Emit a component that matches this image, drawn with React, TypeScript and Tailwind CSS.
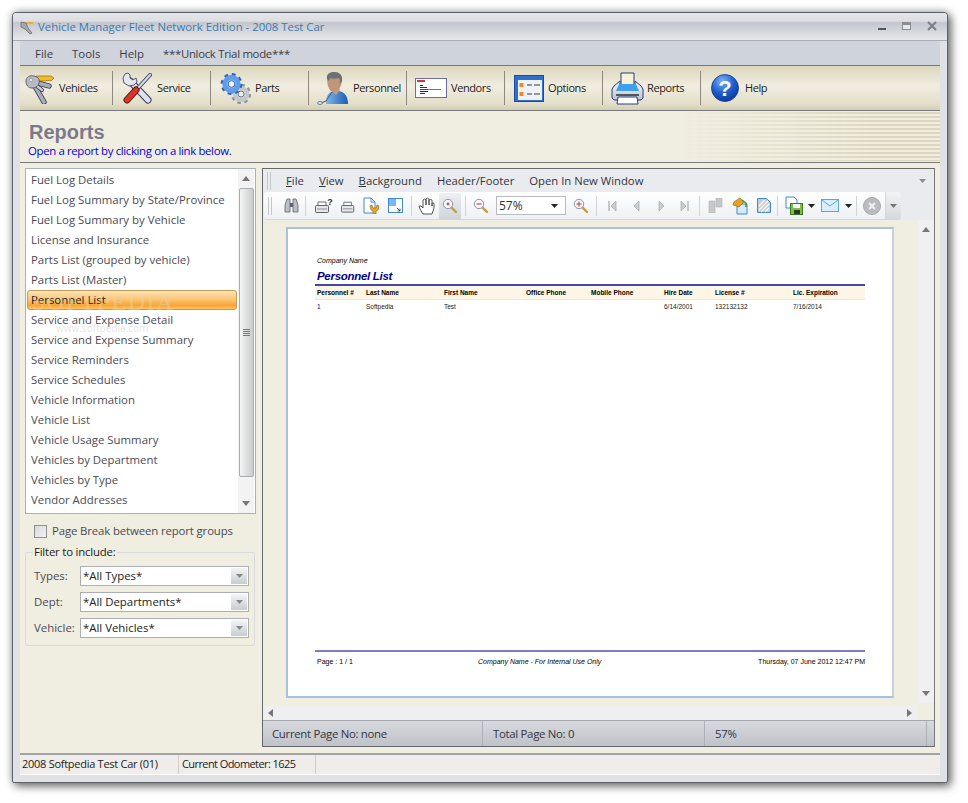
import React from 'react';

const reports = [
  'Fuel Log Details',
  'Fuel Log Summary by State/Province',
  'Fuel Log Summary by Vehicle',
  'License and Insurance',
  'Parts List (grouped by vehicle)',
  'Parts List (Master)',
  'Personnel List',
  'Service and Expense Detail',
  'Service and Expense Summary',
  'Service Reminders',
  'Service Schedules',
  'Vehicle Information',
  'Vehicle List',
  'Vehicle Usage Summary',
  'Vehicles by Department',
  'Vehicles by Type',
  'Vendor Addresses',
];

const KeysIcon = () => (
  <svg width="30" height="32" viewBox="0 0 30 32">
    <path d="M11 4h15l3 2-3 3-2-1-1 1-1-1-1 1H11z" fill="#f5bd22" stroke="#8d6a14" strokeWidth=".7" />
    <g fill="none" strokeLinecap="round">
      <path d="M9 10l15 4M8 11l11 19" stroke="#37395a" strokeWidth="5.400" />
      <path d="M9 10l15 4M8 11l11 19" stroke="#a9aeb5" strokeWidth="3.600" />
      <path d="M8 11l9 7" stroke="#37395a" strokeWidth="4" />
      <path d="M8 11l9 7" stroke="#c6c9ce" strokeWidth="2.400" />
    </g>
    <path d="M1 9c0-4 4-6 8-5 4 1 6 3 5 7-1 4-4 5-7 5-4 0-6-3-6-7z" fill="#b7bbc1" stroke="#45475f" strokeWidth=".8" />
    <circle cx="6" cy="8" r="1.600" fill="#eef0f2" stroke="#777" strokeWidth=".5" />
  </svg>
);

const ToolsIcon = () => (
  <svg width="30" height="32" viewBox="0 0 30 32">
    <g fill="none" strokeLinecap="round">
      <path d="M8 9l18 19" stroke="#2f3560" strokeWidth="7" />
      <path d="M8 9l18 19" stroke="#dfe3ea" strokeWidth="5.200" />
      <path d="M28 3L16 16" stroke="#2f3560" strokeWidth="4" />
      <path d="M28 3L16 16" stroke="#d4d8de" strokeWidth="2.400" />
      <path d="M14 18L5 28" stroke="#4d1210" strokeWidth="7" />
      <path d="M14 18L5 28" stroke="#d8342a" strokeWidth="5.200" />
    </g>
    <path d="M6 1L3 2 1 6l1 5 5 3 5-1 3-3-1-4-3 2-3-2 0-3z" fill="#e4e8ee" stroke="#2f3560" strokeWidth=".8" />
  </svg>
);

const GearsIcon = () => (
  <svg width="31" height="31" viewBox="0 0 31 31">
    <circle cx="21" cy="21" r="8.500" fill="none" stroke="#8f969c" strokeWidth="3.400" strokeDasharray="3.400 3.270" />
    <circle cx="21" cy="21" r="6" fill="none" stroke="#c4c8cc" strokeWidth="4.400" />
    <circle cx="21" cy="21" r="3" fill="#eee" stroke="#6e7479" />
    <circle cx="11.500" cy="11" r="9" fill="none" stroke="#2a63c0" strokeWidth="3.800" strokeDasharray="3.500 3.570" />
    <circle cx="11.500" cy="11" r="6.700" fill="none" stroke="#5f9de8" strokeWidth="5" />
    <circle cx="11.500" cy="11" r="3.400" fill="#f0f4fa" stroke="#2458aa" />
  </svg>
);

const PersonIcon = () => (
  <svg width="31" height="33" viewBox="0 0 31 33">
    <defs>
      <linearGradient id="pb" x1="0" x2="1">
        <stop offset="0" stopColor="#83b5ea" />
        <stop offset="1" stopColor="#1a5cb0" />
      </linearGradient>
    </defs>
    <path d="M9 32c0-7 1-11 7-13h6c6 1 9 6 9 13z" fill="url(#pb)" />
    <path d="M15 19l4 4 4-5-2-4h-5z" fill="#c99c7e" />
    <path d="M10 6c0-4 3-6 7-6 5 0 8 3 8 7 0 6-3 13-8 13s-7-7-7-14z" fill="#c29478" />
    <path d="M10 7c-1-5 3-7 7-7 5 0 9 3 8 9l-2 3c0-3 0-5-1-6-3 1-8 1-9 0l-1 3z" fill="#6c7177" />
    <path d="M15 20l-6 9-5 2" stroke="#38597c" fill="none" strokeWidth="1" />
    <ellipse cx="3" cy="31" rx="2.500" ry="1.500" fill="#dfe4ea" stroke="#38597c" strokeWidth=".7" />
  </svg>
);

const CardIcon = () => (
  <svg width="32" height="20" viewBox="0 0 32 20">
    <rect x=".5" y=".5" width="31" height="19" fill="#fff" stroke="#6b6bad" />
    <rect x="2" y="2" width="8" height="2" fill="#d23c30" />
    <rect x="5" y="7" width="3" height="1" fill="#222" />
    <rect x="5" y="9" width="7" height="1" fill="#333" />
    <rect x="5" y="11" width="12" height="1" fill="#444" />
    <rect x="5" y="13" width="8" height="1" fill="#222" />
    <rect x="5" y="15" width="5" height="1" fill="#333" />
    <rect x="13" y="11" width="13" height="1" fill="#777" />
  </svg>
);

const OptionsIcon = () => (
  <svg width="30" height="27" viewBox="0 0 30 27">
    <rect x=".5" y=".5" width="29" height="26" fill="#2f6fd0" stroke="#1a4da0" />
    <rect x="4" y="5" width="24" height="20" fill="#eef1f5" />
    <rect x="5.500" y="8" width="4" height="4" fill="#f08a20" />
    <rect x="5.500" y="17" width="4" height="4" fill="#f08a20" />
    <path d="M13 10h5M20 10h6M13 19h5M20 19h6" stroke="#777" strokeWidth="1.400" />
  </svg>
);

const PrinterIcon = () => (
  <svg width="33" height="33" viewBox="0 0 33 33">
    <defs>
      <linearGradient id="pr" x1="0" x2="0" y1="0" y2="1">
        <stop offset="0" stopColor="#fbfbfb" />
        <stop offset="1" stopColor="#b9c2cc" />
      </linearGradient>
    </defs>
    <path d="M10 1h13v14H10z" fill="#f6f2d8" stroke="#2a3a80" />
    <path d="M3 14l6-5v5h15V9l6 5 2 3v9l-2 2H3l-2-2v-9z" fill="url(#pr)" stroke="#2a3a80" />
    <path d="M8 12h17l3 7H5z" fill="#3ea0ee" />
    <rect x="5" y="22" width="23" height="2" fill="#555" />
    <path d="M7 25h19l1 7H6z" fill="#fff" stroke="#2a3a80" />
  </svg>
);

const HelpIcon = () => (
  <svg width="28" height="28" viewBox="0 0 28 28">
    <defs>
      <radialGradient id="hb" cx=".4" cy=".25" r=".85">
        <stop offset="0" stopColor="#7fb2f2" />
        <stop offset=".5" stopColor="#1f5fd0" />
        <stop offset="1" stopColor="#0b2f8c" />
      </radialGradient>
    </defs>
    <circle cx="14" cy="14" r="13.500" fill="url(#hb)" stroke="#123a90" strokeWidth=".8" />
    <text x="14" y="22" textAnchor="middle" fontSize="22" fontWeight="700" fill="#fff" fontFamily="Liberation Sans, sans-serif">?</text>
  </svg>
);

const mainButtons = [
  { label: 'Vehicles', icon: <KeysIcon />, w: 'w-[93px]', pad: 'pl-[5px]', gap: 'gap-[4px]' },
  { label: 'Service', icon: <ToolsIcon />, w: 'w-[98px]', pad: 'pl-[9px]', gap: 'gap-[5px]' },
  { label: 'Parts', icon: <GearsIcon />, w: 'w-[98px]', pad: 'pl-[9px]', gap: 'gap-[4px]' },
  { label: 'Personnel', icon: <PersonIcon />, w: 'w-[98px]', pad: 'pl-[8px]', gap: 'gap-[5px]' },
  { label: 'Vendors', icon: <CardIcon />, w: 'w-[98px]', pad: 'pl-[8px]', gap: 'gap-[4px]' },
  { label: 'Options', icon: <OptionsIcon />, w: 'w-[98px]', pad: 'pl-[9px]', gap: 'gap-[4px]' },
  { label: 'Reports', icon: <PrinterIcon />, w: 'w-[98px]', pad: 'pl-[8px]', gap: 'gap-[3px]' },
  { label: 'Help', icon: <HelpIcon />, w: 'w-[98px]', pad: 'pl-[10px]', gap: 'gap-[6px]' },
];

const Sep = () => <div className="w-px h-[20px] bg-[#d0d3d8] shrink-0" />;

const Grip = () => (
  <div className="flex gap-[2px] h-[18px] shrink-0">
    <div className="w-px bg-[#c3c6cb]" />
    <div className="w-px bg-[#c3c6cb]" />
  </div>
);

const Slot = ({ w, children }: { w: string; children?: React.ReactNode }) => (
  <div className={`${w} h-full flex items-center justify-center shrink-0`}>{children}</div>
);

const Caret = ({ color = '#222' }: { color?: string }) => (
  <svg width="7" height="4" viewBox="0 0 7 4"><path d="M0 0h7L3.500 4z" fill={color} /></svg>
);

const ArrowUp = () => (
  <svg width="8" height="5" viewBox="0 0 8 5"><path d="M4 0l4 5H0z" fill="#777" /></svg>
);
const ArrowDown = () => (
  <svg width="8" height="5" viewBox="0 0 8 5"><path d="M0 0h8L4 5z" fill="#777" /></svg>
);

const Loupe = ({ mark }: { mark?: 'plus' | 'minus' | 'dot' }) => (
  <svg width="16" height="16" viewBox="0 0 16 16">
    <path d="M9 9l5 5" stroke="#c89a3c" strokeWidth="2.400" strokeLinecap="round" />
    <circle cx="6" cy="6" r="4.700" fill="#f4f7fa" stroke="#8a97a5" />
    {mark === 'dot' && <circle cx="6" cy="6" r="1.400" fill="#d0503c" />}
    {mark !== 'dot' && <path d="M3.500 6h5" stroke="#d0503c" strokeWidth="1.200" />}
    {mark === 'plus' && <path d="M6 3.500v5" stroke="#d0503c" strokeWidth="1.200" />}
  </svg>
);

const Binoculars = () => (
  <svg width="15" height="15" viewBox="0 0 15 15">
    <path d="M3 1h3v13H1V7zM12 1H9v13h5V7z" fill="#b8c0c8" stroke="#5d6369" strokeWidth=".8" />
    <rect x="6" y="5" width="3" height="4" fill="#5d6369" />
  </svg>
);

const SmallPrinter = ({ help }: { help?: boolean }) => (
  <svg width="18" height="16" viewBox="0 0 18 16">
    <path d="M3 4h8v4H3z" fill="#fff" stroke="#6b7178" />
    <rect x=".5" y="7.500" width="13" height="7" rx="1" fill="#e4e7ea" stroke="#5d6369" />
    <path d="M2 11h10" stroke="#8b9197" />
    {help && (
      <text x="15" y="7" textAnchor="middle" fontSize="9" fontWeight="700" fill="#333" fontFamily="Liberation Sans, sans-serif">?</text>
    )}
  </svg>
);

const PageWrench = () => (
  <svg width="17" height="17" viewBox="0 0 17 17">
    <path d="M1 1h7l4 4v11H1z" fill="#fff" stroke="#3e8ad0" />
    <path d="M8 1v4h4" fill="none" stroke="#3e8ad0" />
    <path d="M9 8l1 3h3l1-3 2 1-1 4-2 1v3h-3v-3l-2-1-1-4z" fill="#e8a820" stroke="#8c6210" strokeWidth=".6" />
  </svg>
);

const PageSize = () => (
  <svg width="15" height="15" viewBox="0 0 15 15">
    <rect x=".5" y=".5" width="14" height="14" fill="#fff" stroke="#3e8ad0" />
    <rect x="1" y="1" width="7" height="7" fill="#7ab7ea" />
    <path d="M9 10l3 3m0-2.500V13H9.500" stroke="#333" fill="none" strokeWidth=".8" />
  </svg>
);

const Hand = () => (
  <svg width="17" height="18" viewBox="0 0 17 18">
    <path d="M5 17l-3-5-1-3 2 0 2 2V3l1.500-1L8 3v5-6l1.500-1L11 2v6-5l1.500-.5L14 3v6-3l1.500 0L16 7v4l-2 6z" fill="#fff" stroke="#444" strokeWidth=".9" />
  </svg>
);

const NavArrow = ({ dir, bar }: { dir: 'l' | 'r'; bar?: boolean }) => (
  <svg width="9" height="12" viewBox="0 0 9 12">
    {dir === 'l' ? (
      <path d={bar ? 'M8 1v10L3 6z' : 'M7 1v10L2 6z'} fill="#c9ccd0" stroke="#a5a8ad" strokeWidth=".7" />
    ) : (
      <path d={bar ? 'M1 1v10l5-5z' : 'M2 1v10l5-5z'} fill="#c9ccd0" stroke="#a5a8ad" strokeWidth=".7" />
    )}
    {bar && <path d={dir === 'l' ? 'M1 1v10' : 'M8 1v10'} stroke="#a5a8ad" strokeWidth="1.200" />}
  </svg>
);

const FacingPages = () => (
  <svg width="15" height="15" viewBox="0 0 15 15">
    <path d="M1 3h6v12H1zM8 0h6v9H8z" fill="#c6c9cc" stroke="#b0b3b7" strokeWidth=".6" />
  </svg>
);

const PaintPage = () => (
  <svg width="17" height="18" viewBox="0 0 17 18">
    <path d="M6 7h10v10H6z" fill="#d6e9fa" stroke="#3e8ad0" />
    <path d="M9 1l4 4-5 5-6-2 1-3z" fill="#e8a020" stroke="#8c6210" strokeWidth=".6" />
    <path d="M11 3l4 3 0 4" stroke="#3c9030" fill="none" strokeWidth="1.400" />
  </svg>
);

const HatchPage = () => (
  <svg width="14" height="15" viewBox="0 0 14 15">
    <path d="M.5.5h9l4 4v10H.5z" fill="#c9ccd0" stroke="#3e8ad0" />
    <path d="M2 8l6-6M2 12l9-9M4 14l8-8M8 14l4-4" stroke="#fff" strokeWidth="1.100" />
  </svg>
);

const SaveIcon = () => (
  <svg width="18" height="19" viewBox="0 0 18 19">
    <path d="M1 1h8l3 3v8H1z" fill="#fff" stroke="#3e8ad0" />
    <rect x="5.500" y="7.500" width="12" height="11" fill="#7cc04a" stroke="#3c7a1e" />
    <rect x="8" y="8" width="7" height="4" fill="#fff" />
    <rect x="9" y="14" width="6" height="4" fill="#333" />
  </svg>
);

const MailIcon = () => (
  <svg width="18" height="13" viewBox="0 0 18 13">
    <rect x=".5" y=".5" width="17" height="12" fill="#d9edfb" stroke="#58a6e0" />
    <path d="M1 1l8 6 8-6" fill="none" stroke="#58a6e0" />
  </svg>
);

const StopIcon = () => (
  <svg width="18" height="18" viewBox="0 0 18 18">
    <circle cx="9" cy="9" r="8.500" fill="#b9bbbe" stroke="#a6a8ab" />
    <path d="M6 6l6 6M12 6l-6 6" stroke="#eee" strokeWidth="2.200" />
  </svg>
);

const PreviewToolbar = () => (
  <div className="w-[637px] h-[28px] flex items-center rounded-[3px] bg-gradient-to-b from-[#ffffff] to-[#eef0f3] border-b border-r border-[#d4d6da] shrink-0 pl-[4px]">
    <Grip />
    <Slot w="w-[11px]" />
    <Slot w="w-[17px]"><Binoculars /></Slot>
    <Slot w="w-[5px]" />
    <Sep />
    <Slot w="w-[9px]" />
    <Slot w="w-[18px]"><SmallPrinter help /></Slot>
    <Slot w="w-[8px]" />
    <Slot w="w-[17px]"><SmallPrinter /></Slot>
    <Slot w="w-[4px]" />
    <Slot w="w-[18px]"><PageWrench /></Slot>
    <Slot w="w-[7px]" />
    <Slot w="w-[16px]"><PageSize /></Slot>
    <Slot w="w-[8px]" />
    <Sep />
    <Slot w="w-[5px]" />
    <Slot w="w-[18px]"><Hand /></Slot>
    <Slot w="w-[4px]" />
    <div className="w-[22px] h-[26px] flex items-center justify-center bg-gradient-to-b from-[#eef0f2] to-[#d0d4d9] shrink-0">
      <Loupe mark="dot" />
    </div>
    <Slot w="w-[4px]" />
    <Sep />
    <Slot w="w-[7px]" />
    <Slot w="w-[16px]"><Loupe mark="minus" /></Slot>
    <Slot w="w-[7px]" />
    <div className="w-[70px] h-[19px] bg-white border border-[#b8bcc2] flex items-center justify-between pl-[2px] pr-[7px] shrink-0 text-[12px] text-[#333]">
      <span>57%</span>
      <Caret />
    </div>
    <Slot w="w-[7px]" />
    <Slot w="w-[16px]"><Loupe mark="plus" /></Slot>
    <Slot w="w-[7px]" />
    <Sep />
    <Slot w="w-[9px]" />
    <Slot w="w-[12px]"><NavArrow dir="l" bar /></Slot>
    <Slot w="w-[12px]" />
    <Slot w="w-[12px]"><NavArrow dir="l" /></Slot>
    <Slot w="w-[13px]" />
    <Slot w="w-[12px]"><NavArrow dir="r" /></Slot>
    <Slot w="w-[11px]" />
    <Slot w="w-[12px]"><NavArrow dir="r" bar /></Slot>
    <Slot w="w-[9px]" />
    <Sep />
    <Slot w="w-[8px]" />
    <Slot w="w-[15px]"><FacingPages /></Slot>
    <Slot w="w-[8px]" />
    <Slot w="w-[17px]"><PaintPage /></Slot>
    <Slot w="w-[9px]" />
    <Slot w="w-[14px]"><HatchPage /></Slot>
    <Slot w="w-[6px]" />
    <Sep />
    <Slot w="w-[7px]" />
    <Slot w="w-[18px]"><SaveIcon /></Slot>
    <Slot w="w-[4px]" />
    <Slot w="w-[8px]"><Caret /></Slot>
    <Slot w="w-[6px]" />
    <Slot w="w-[18px]"><MailIcon /></Slot>
    <Slot w="w-[5px]" />
    <Slot w="w-[8px]"><Caret /></Slot>
    <Slot w="w-[4px]" />
    <Sep />
    <Slot w="w-[6px]" />
    <Slot w="w-[18px]"><StopIcon /></Slot>
    <Slot w="w-[4px]" />
    <div className="w-[16px] h-full flex items-center justify-center border-l border-[#d4d6da] bg-gradient-to-b from-[#f2f3f5] to-[#d5d8dd] rounded-r-[3px] shrink-0">
      <Caret color="#777" />
    </div>
  </div>
);

const cols = 'grid grid-cols-[49px_78px_82px_65px_73px_51px_78px_1fr] pl-[2px]';

const ReportPage = () => (
  <div className="w-[608px] h-[471px] bg-white border-2 border-[#a9c1dc] border-r-[#c5d2e0] flex flex-col px-[27px] pt-[28px] font-['Liberation_Sans',sans-serif] text-black shrink-0">
    <div className="pl-[2px] text-[7px] leading-[8px] italic">Company Name</div>
    <div className="pl-[2px] mt-[4px] text-[11.500px] leading-[14px] font-bold italic tracking-[-0.3px] text-[#00008b]">Personnel List</div>
    <div className="h-[2px] bg-[#4646a8] mt-[1px]" />
    <div className={`${cols} bg-[#fdf5e6] h-[14px] items-center text-[6.500px] font-bold border-b border-[#e6e6e6]`}>
      <span>Personnel #</span>
      <span>Last Name</span>
      <span>First Name</span>
      <span>Office Phone</span>
      <span>Mobile Phone</span>
      <span>Hire Date</span>
      <span>License #</span>
      <span>Lic. Expiration</span>
    </div>
    <div className={`${cols} h-[13px] items-center text-[6.500px] text-[#222]`}>
      <span className="text-[#00008b]">1</span>
      <span>Softpedia</span>
      <span>Test</span>
      <span />
      <span />
      <span>6/14/2001</span>
      <span>132132132</span>
      <span>7/16/2014</span>
    </div>
    <div className="flex-1" />
    <div className="h-[2px] bg-[#7c7cc4]" />
    <div className="grid grid-cols-[161px_1fr_auto] items-center h-[14px] mt-[3px] mb-[27px] text-[7px] pl-[2px]">
      <span>Page : 1 / 1</span>
      <span className="italic">Company Name - For Internal Use Only</span>
      <span className="text-right">Thursday, 07 June 2012 12:47 PM</span>
    </div>
  </div>
);

const Select = ({ label, value }: { label: string; value: string }) => (
  <div className="flex items-center h-[20px]">
    <span className="w-[47px] pl-px text-[#4a4a55]">{label}</span>
    <div className="w-[169px] h-[20px] border border-[#abaeb3] bg-white flex items-center justify-between pl-[2px] pr-px text-[#222]">
      <span>{value}</span>
      <div className="w-[16px] h-[16px] flex items-center justify-center bg-gradient-to-b from-[#f4f5f6] to-[#c8ccd1]">
        <Caret color="#888" />
      </div>
    </div>
  </div>
);

const App = () => {
  return (
    <div className="w-[968px] h-[803px] bg-white pt-[12px] pl-[12px] font-['Open_Sans',sans-serif] text-[11.400px] text-[#333] overflow-hidden">
      <div className="w-[936px] h-[771px] flex flex-col rounded-t-[4px] rounded-b-[2px] border border-[#5f6367] bg-[#dfe1e4] shadow-[3px_3px_10px_rgba(0,0,0,0.55),0_0_8px_rgba(0,0,0,0.25)]">
        {/* title bar */}
        <div className="h-[28px] shrink-0 flex items-center pl-[6px] pr-[10px] pt-px bg-[linear-gradient(to_bottom,#e4e6e9_0%,#dcdee2_30%,#c3c6cd_36%,#e6e8eb_100%)] rounded-t-[4px] border-b border-[#a9acb2]">
          <svg width="16" height="16" viewBox="0 0 16 16" className="mr-[3px]">
            <path d="M6 3h8l1 1-1 1H6z" fill="#e6b030" />
            <path d="M2 3l5 1 2 5 4 5-2 1-5-5-4-2z" fill="#a4a8ae" stroke="#555" strokeWidth=".6" />
          </svg>
          <span className="text-[#3b7aae]">Vehicle Manager Fleet Network Edition - 2008 Test Car</span>
          <div className="ml-auto flex items-center gap-[16px] h-full mb-[2px]">
            <div className="w-[8px] h-[2px] bg-[#555] mt-[6px]" />
            <div className="w-[9px] h-[8px] border border-[#8a8d92] border-t-[3px] bg-[#e6e8eb]" />
            <svg width="10" height="10" viewBox="0 0 10 10">
              <path d="M1 1l8 8M9 1l-8 8" stroke="#7a7e83" strokeWidth="2" />
            </svg>
          </div>
        </div>

        <div className="flex-1 flex flex-col mx-[7px] min-h-0">
          {/* menu */}
          <div className="h-[25px] shrink-0 flex items-center gap-[19px] pl-[15px] pt-[2px] bg-[#cfd3dc] border-b border-[#77797e] text-[#3a3d45]">
            <span>File</span>
            <span>Tools</span>
            <span>Help</span>
            <span className="tracking-[-0.3px]">***Unlock Trial mode***</span>
          </div>

          {/* main toolbar */}
          <div className="h-[45px] shrink-0 flex items-center bg-[linear-gradient(to_bottom,#dcd6bd_0%,#f0ede0_45%,#e4dfca_85%,#d4ceb4_100%)] border-b border-[#77797e]">
            {mainButtons.map((b, i) => (
              <div key={b.label} className={`${b.w} ${b.pad} ${b.gap} h-[34px] flex items-center shrink-0 ${i < 7 ? 'border-r border-[#8d8b80]' : ''}`}>
                {b.icon}
                <span className="text-[#222] text-[11px] tracking-[-0.4px] pt-px">{b.label}</span>
              </div>
            ))}
          </div>

          {/* heading */}
          <div className="h-[52px] shrink-0 flex justify-between bg-[#f0eee1] border-b border-[#77797e]">
            <div className="pl-[9px] pt-[8px]">
              <div className="text-[20px] leading-[26px] font-bold text-[#7a7a8c] font-['Liberation_Sans',sans-serif]">Reports</div>
              <div className="text-[#0000dd] leading-[12px] tracking-[-0.35px] -ml-px">Open a report by clicking on a link below.</div>
            </div>
            <div className="w-[260px] my-px bg-[repeating-linear-gradient(to_bottom,#dcd6bb_0px,#dcd6bb_2px,#f0eee1_2px,#f0eee1_4px)] [mask-image:linear-gradient(to_right,transparent,black_75%)]" />
          </div>

          {/* content */}
          <div className="flex-1 flex gap-[6px] pl-[5px] pt-[5px] bg-[#f0eee1] min-h-0">
            <div className="w-[231px] shrink-0 flex flex-col">
              <div className="h-[346px] relative flex bg-white border border-[#abb2b7] shrink-0">
                <div className="flex-1 pt-px pl-px">
                  {reports.map((r) => (
                    <div
                      key={r}
                      className={
                        r === 'Personnel List'
                          ? 'h-[20px] flex items-center pl-[3px] rounded-[3px] border border-[#c49a5a] bg-[linear-gradient(to_bottom,#fde4b4_0%,#fbc677_45%,#f9a534_80%,#fcc46a_100%)] text-[#222] w-[210px]'
                          : 'h-[20px] flex items-center pl-[4px] text-[#4a4a55]'
                      }
                    >
                      {r}
                    </div>
                  ))}
                </div>
                <div className="w-[16px] mr-px bg-[#f3f3f3] flex flex-col items-center">
                  <div className="h-[19px] flex items-center justify-center"><ArrowUp /></div>
                  <div className="w-[15px] h-[289px] rounded-[2px] border border-[#a9acb0] bg-[linear-gradient(to_right,#f4f4f4,#c9cbce)] flex flex-col items-center justify-center gap-px">
                    <div className="w-[7px] h-px bg-[#777]" />
                    <div className="w-[7px] h-px bg-[#777]" />
                    <div className="w-[7px] h-px bg-[#777]" />
                    <div className="w-[7px] h-px bg-[#777]" />
                  </div>
                  <div className="flex-1 flex items-end pb-[7px]"><ArrowDown /></div>
                </div>
                {/* watermark from the screenshot */}
                <div className="absolute left-[6px] top-[121px] font-['Liberation_Serif',serif] text-[24px] leading-[24px] tracking-[1.500px] text-[#e8d8b8]/40 pointer-events-none">SOFTPEDIA</div>
                <div className="absolute left-[30px] top-[153px] text-[10px] leading-[12px] text-[#bbb]/40 pointer-events-none">www.softpedia.com</div>
              </div>

              <label className="flex items-center gap-[5px] h-[26px] mt-[4px] pl-[9px] text-[#4a4a55] tracking-[-0.13px]">
                <span className="w-[13px] h-[13px] border border-[#8e8f8f] bg-gradient-to-br from-[#d8d8d8] to-[#f4f4f4]" />
                Page Break between report groups
              </label>

              <fieldset className="mt-px w-[230px] h-[101px] border border-[#d8dadd] rounded-[3px] pl-[7px] flex flex-col">
                <legend className="px-px text-[#222] leading-[14px] tracking-[-0.2px]">Filter to include:</legend>
                <div className="flex flex-col gap-[6px] mt-[7px]">
                  <Select label="Types:" value="*All Types*" />
                  <Select label="Dept:" value="*All Departments*" />
                  <Select label="Vehicle:" value="*All Vehicles*" />
                </div>
              </fieldset>
            </div>

            {/* preview panel */}
            <div className="w-[673px] h-[579px] shrink-0 flex flex-col border border-[#66686c] border-r-[#77797e] bg-[#f0eee1]">
              <div className="h-[23px] shrink-0 flex items-center bg-[#e9ebef] pl-[4px] pr-[8px] text-[#33363d]">
                <Grip />
                <div className="flex gap-[15px] ml-[15px] pt-px text-[11.300px]">
                  <span><span className="underline">F</span>ile</span>
                  <span><span className="underline">V</span>iew</span>
                  <span><span className="underline">B</span>ackground</span>
                  <span>Header/Footer</span>
                  <span>Open In New Window</span>
                </div>
                <div className="ml-auto"><Caret color="#8a8d92" /></div>
              </div>
              <div className="h-[28px] shrink-0 flex bg-[#e9ebef] pl-px">
                <PreviewToolbar />
              </div>
              <div className="flex-1 flex min-h-0">
                <div className="w-[655px] pl-[23px] pt-[7px]">
                  <ReportPage />
                </div>
                <div className="w-[16px] bg-[#f0f0f0] flex flex-col items-center justify-between py-[7px] mb-[2px]">
                  <ArrowUp />
                  <ArrowDown />
                </div>
              </div>
              <div className="h-[15px] shrink-0 w-[654px] bg-[#efefef] flex items-center justify-between px-[5px]">
                <svg width="5" height="8" viewBox="0 0 5 8"><path d="M5 0v8L0 4z" fill="#777" /></svg>
                <svg width="5" height="8" viewBox="0 0 5 8"><path d="M0 0v8l5-4z" fill="#777" /></svg>
              </div>
              <div className="h-[26px] shrink-0 flex items-center bg-gradient-to-b from-[#d7d9de] to-[#bfc2c8] border-t border-[#a6a8ad] text-[#33363d] tracking-[-0.3px]">
                <div className="w-[220px] h-full flex items-center pl-[9px] border-r border-[#aeb0b5]">Current Page No: none</div>
                <div className="w-[222px] h-full flex items-center pl-[10px] border-r border-[#aeb0b5]">Total Page No: 0</div>
                <div className="w-[222px] h-full flex items-center pl-[10px] border-r border-[#aeb0b5]">57%</div>
              </div>
            </div>
          </div>

          {/* status bar */}
          <div className="h-[22px] shrink-0 flex items-center bg-[#f0ecea] border-t-2 border-[#a2a3a6] border-b border-b-white text-[#222] text-[11px] whitespace-nowrap">
            <div className="w-[159px] h-full flex items-center pl-[2px] border-r border-[#d0cdcb] tracking-[-0.27px]">2008 Softpedia Test Car (01)</div>
            <div className="w-[137px] h-full flex items-center pl-[3px] border-r border-[#d0cdcb] tracking-[-0.58px]">Current Odometer: 1625</div>
          </div>
          <div className="h-[7px] shrink-0" />
        </div>
      </div>
    </div>
  );
};

export default App;
